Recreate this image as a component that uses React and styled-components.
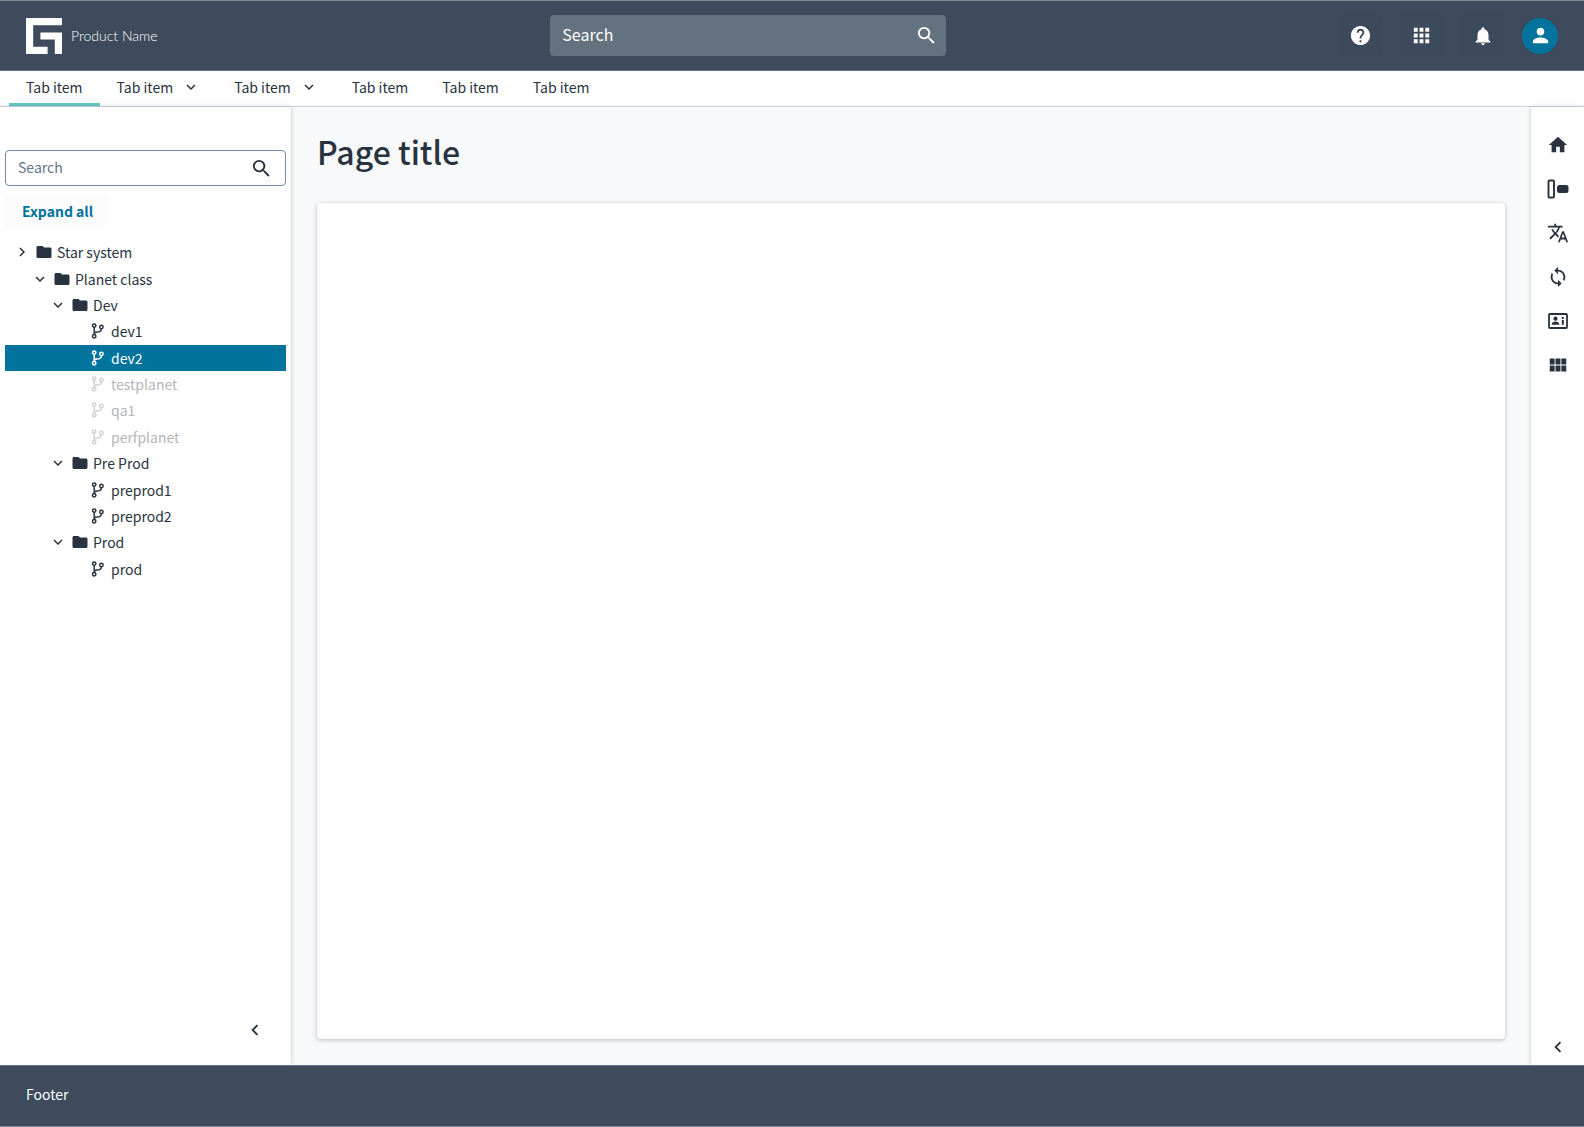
import React, { useState } from "react";
import styled, { createGlobalStyle, css } from "styled-components";
import {
  MdApps,
  MdChevronLeft,
  MdChevronRight,
  MdExpandMore,
  MdFolder,
  MdHelp,
  MdHome,
  MdNotifications,
  MdPerson,
  MdSearch,
  MdSync,
  MdTranslate,
  MdViewModule,
} from "react-icons/md";

const GlobalStyle = createGlobalStyle`
  * {
    box-sizing: border-box;
  }
  body {
    margin: 0;
    font-family: "Noto Sans CJK JP", "Noto Sans", sans-serif;
    font-size: 14px;
    line-height: 24px;
    color: #28333f;
  }
  button, input {
    font: inherit;
    color: inherit;
  }
`;

const Page = styled.div`
  display: flex;
  flex-direction: column;
  min-height: 100vh;
`;

const Header = styled.header`
  display: flex;
  align-items: center;
  justify-content: space-between;
  height: 71px;
  padding: 0 26px;
  background-color: #3d4b5d;
  border-top: 1px solid #7f8d99;
  border-bottom: 1px solid #66727f;
  color: #ffffff;
`;

const Brand = styled.a`
  display: flex;
  align-items: center;
  gap: 9px;
  color: #ffffff;
  font-family: Lato, sans-serif;
  font-size: 14px;
  font-weight: 300;
  text-decoration: none;
`;

const HeaderSearch = styled.label`
  display: flex;
  align-items: center;
  width: 25vw;
  height: 41px;
  padding: 0 8px 0 12px;
  border-radius: 4px;
  background-color: #64717e;
`;

const SearchInput = styled.input`
  flex: 1;
  min-width: 0;
  padding: 0 0 ${(props) => (props.$large ? "4px" : "2px")};
  border: none;
  outline: none;
  background: transparent;
  font-size: ${(props) => (props.$large ? "16px" : "14px")};

  &::placeholder {
    color: ${(props) => (props.$large ? "#ffffff" : "#62748c")};
    opacity: 1;
  }
`;

const HeaderActions = styled.div`
  display: flex;
  align-items: center;
  gap: 18px;
`;

const IconButton = styled.button`
  display: flex;
  align-items: center;
  justify-content: center;
  width: ${(props) => (props.$small ? "36px" : "43px")};
  height: ${(props) => (props.$small ? "36px" : "43px")};
  padding: 0;
  border: none;
  background-color: transparent;
  cursor: pointer;
`;

const HeaderButton = styled(IconButton)`
  border-radius: 4px;
  background-color: #3c4a5b;
`;

const Avatar = styled(IconButton)`
  border-radius: 50%;
  background-color: #01739d;
`;

const Tabs = styled.nav`
  display: flex;
  height: 36px;
  padding: 0 9px;
  border-bottom: 1px solid #cbd6e2;
  background-color: #ffffff;
`;

const Tab = styled.a`
  display: flex;
  align-items: center;
  gap: 9px;
  padding: 0 17px;
  border-bottom: 3px solid ${(props) => (props.$active ? "#62c9c3" : "transparent")};
  color: inherit;
  text-decoration: none;
`;

const Body = styled.div`
  display: flex;
  flex: 1;
`;

const Sidebar = styled.aside`
  display: flex;
  flex-direction: column;
  flex: none;
  width: 291px;
  padding: 43px 5px 17px;
  background-color: #ffffff;
  box-shadow: 0 0 4px rgba(40, 51, 63, 0.25);
  z-index: 1;
`;

const SidebarSearch = styled.label`
  display: flex;
  align-items: center;
  height: 36px;
  padding: 0 12px;
  border: 1px solid #7389ae;
  border-radius: 4px;
`;

const ExpandButton = styled.button`
  align-self: flex-start;
  height: 35px;
  margin: 9px 0;
  padding: 0 17px 4px;
  border: none;
  border-radius: 4px;
  background-color: #fcfcfc;
  color: #01739d;
  font-weight: 700;
  cursor: pointer;
`;

const Tree = styled.ul`
  display: grid;
  grid-auto-rows: 1fr;
  min-height: 343px;
  margin: 0;
  padding: 0;
  list-style: none;
`;

const TreeItem = styled.li`
  display: flex;
  align-items: center;
  gap: 4px;
  padding-left: ${(props) => props.$level * 18 - 10}px;
  cursor: pointer;

  ${(props) =>
    props.$selected &&
    css`
      background-color: #01739d;
      color: #ffffff;
    `}
  ${(props) =>
    props.$disabled &&
    css`
      color: #b3b6ba;
      cursor: default;

      svg {
        opacity: 0.6;
      }
    `}
`;

const TreeIcon = styled.span`
  display: flex;
  justify-content: center;
  width: 18px;
`;

const CollapseButton = styled(IconButton)`
  align-self: flex-end;
  margin-top: auto;
  margin-right: 13px;
`;

const Main = styled.main`
  display: flex;
  flex-direction: column;
  flex: 1;
  padding: 26px;
  background-color: #f7f9fb;
`;

const Title = styled.h1`
  margin: 0 0 34px;
  font-size: 32px;
  font-weight: 500;
  line-height: 36px;
`;

const Card = styled.section`
  flex: 1;
  border-radius: 4px;
  background-color: #ffffff;
  box-shadow: 0 1px 4px rgba(40, 51, 63, 0.3);
`;

const Rail = styled.aside`
  display: flex;
  flex-direction: column;
  align-items: center;
  flex: none;
  gap: 1px;
  width: 53px;
  padding-top: 16px;
  background-color: #ffffff;
  box-shadow: 0 0 4px rgba(40, 51, 63, 0.25);
  z-index: 1;
`;

const RailBottom = styled.div`
  margin-top: auto;
`;

const Footer = styled.footer`
  display: flex;
  align-items: center;
  height: 62px;
  padding: 0 26px 4px;
  border-top: 1px solid #66727f;
  border-bottom: 1px solid #7f8d99;
  background-color: #3d4b5d;
  color: #ffffff;
  z-index: 2;
`;

const Logo = () => (
  <svg width="36" height="36" viewBox="0 0 5 5" fill="currentColor" aria-hidden="true">
    <path d="M0 0h5v1H1v3h2v1H0z" />
    <path d="M2 2h3v3H4V3H2z" />
  </svg>
);

const BranchIcon = () => (
  <svg width="16" height="16" viewBox="0 0 16 16" fill="none" stroke="currentColor" strokeWidth="1.5" aria-hidden="true">
    <circle cx="4.2" cy="2.6" r="1.7" />
    <circle cx="11.4" cy="4" r="1.7" />
    <circle cx="4.2" cy="13.3" r="1.7" />
    <path d="M4.2 4.3v7.3M11.4 5.7c0 2.8-2 3.3-4.6 3.3-1.6 0-2.6.8-2.6 2.3" />
  </svg>
);

const PanelIcon = () => (
  <svg width="22" height="20" viewBox="0 0 22 20" aria-hidden="true">
    <rect x="1.5" y="1.5" width="5.5" height="17" rx="1" fill="none" stroke="currentColor" strokeWidth="1.9" />
    <rect x="10" y="6" width="11.5" height="8" rx="2.5" fill="currentColor" />
  </svg>
);

const ContactIcon = () => (
  <svg width="20" height="16" viewBox="0 0 20 16" fill="currentColor" aria-hidden="true">
    <rect x="1" y="1" width="18" height="14" rx="1" fill="none" stroke="currentColor" strokeWidth="1.8" />
    <circle cx="7.5" cy="5.7" r="2.1" />
    <path d="M3.6 11.8c0-2.2 1.8-3.2 3.9-3.2s3.9 1 3.9 3.2z" />
    <rect x="13.8" y="4" width="2" height="2" />
    <rect x="13.8" y="7" width="2" height="4.8" />
  </svg>
);

const tabs = [
  { active: true },
  { menu: true },
  { menu: true },
  {},
  {},
  {},
];

const nodes = [
  { name: "Star system", level: 1, folder: true, closed: true },
  { name: "Planet class", level: 2, folder: true },
  { name: "Dev", level: 3, folder: true },
  { name: "dev1", level: 4 },
  { name: "dev2", level: 4 },
  { name: "testplanet", level: 4, disabled: true },
  { name: "qa1", level: 4, disabled: true },
  { name: "perfplanet", level: 4, disabled: true },
  { name: "Pre Prod", level: 3, folder: true },
  { name: "preprod1", level: 4 },
  { name: "preprod2", level: 4 },
  { name: "Prod", level: 3, folder: true },
  { name: "prod", level: 4 },
];

const railItems = [
  { label: "Home", icon: <MdHome size={22} /> },
  { label: "Panels", icon: <PanelIcon /> },
  { label: "Language", icon: <MdTranslate size={22} /> },
  { label: "Sync", icon: <MdSync size={22} /> },
  { label: "Contact", icon: <ContactIcon /> },
  { label: "Modules", icon: <MdViewModule size={22} /> },
];

const App = () => {
  const [selected, setSelected] = useState("dev2");

  return (
    <Page>
      <GlobalStyle />
      <Header>
        <Brand href="#">
          <Logo />
          Product Name
        </Brand>
        <HeaderSearch>
          <SearchInput $large type="text" placeholder="Search" aria-label="Search" />
          <MdSearch size={23} />
        </HeaderSearch>
        <HeaderActions>
          <HeaderButton aria-label="Help">
            <MdHelp size={23} />
          </HeaderButton>
          <HeaderButton aria-label="Apps">
            <MdApps size={23} />
          </HeaderButton>
          <HeaderButton aria-label="Notifications">
            <MdNotifications size={22} />
          </HeaderButton>
          <Avatar $small aria-label="Account">
            <MdPerson size={23} />
          </Avatar>
        </HeaderActions>
      </Header>
      <Tabs>
        {tabs.map((tab, index) => (
          <Tab key={index} href="#" $active={tab.active}>
            Tab item
            {tab.menu && <MdExpandMore size={18} />}
          </Tab>
        ))}
      </Tabs>
      <Body>
        <Sidebar>
          <SidebarSearch>
            <SearchInput type="text" placeholder="Search" aria-label="Search tree" />
            <MdSearch size={23} />
          </SidebarSearch>
          <ExpandButton>Expand all</ExpandButton>
          <Tree role="tree">
            {nodes.map((node) => (
              <TreeItem
                key={node.name}
                role="treeitem"
                aria-level={node.level}
                aria-selected={node.name === selected}
                aria-disabled={node.disabled}
                $level={node.level}
                $selected={node.name === selected}
                $disabled={node.disabled}
                onClick={() => !node.disabled && setSelected(node.name)}
              >
                <TreeIcon>
                  {node.folder && (node.closed ? <MdChevronRight size={18} /> : <MdExpandMore size={18} />)}
                </TreeIcon>
                <TreeIcon>{node.folder ? <MdFolder size={18} /> : <BranchIcon />}</TreeIcon>
                {node.name}
              </TreeItem>
            ))}
          </Tree>
          <CollapseButton $small aria-label="Collapse navigation">
            <MdChevronLeft size={22} />
          </CollapseButton>
        </Sidebar>
        <Main>
          <Title>Page title</Title>
          <Card />
        </Main>
        <Rail>
          {railItems.map((item) => (
            <IconButton key={item.label} aria-label={item.label}>
              {item.icon}
            </IconButton>
          ))}
          <RailBottom>
            <IconButton $small aria-label="Expand panel">
              <MdChevronLeft size={22} />
            </IconButton>
          </RailBottom>
        </Rail>
      </Body>
      <Footer>Footer</Footer>
    </Page>
  );
};

export default App;
